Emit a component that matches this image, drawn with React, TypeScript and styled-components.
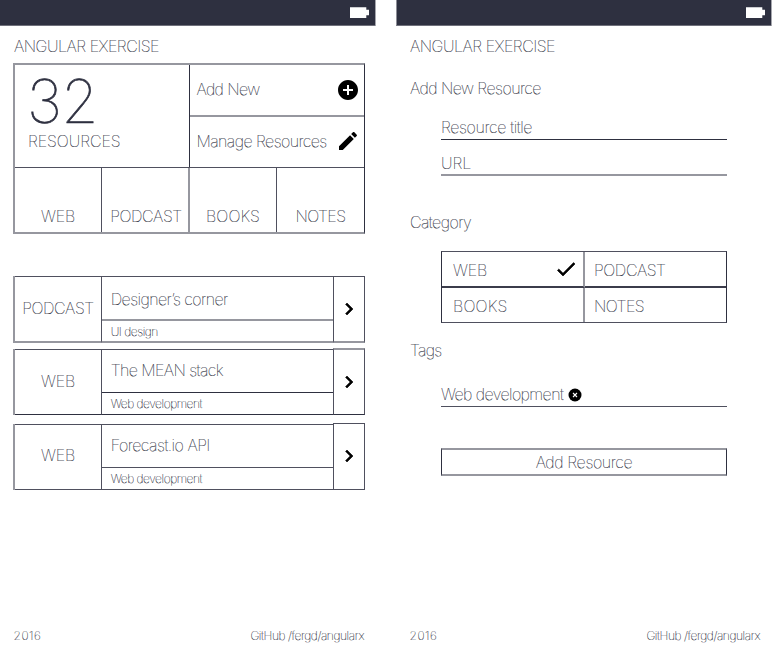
import React from "react";
import styled, { createGlobalStyle, css } from "styled-components";

const ink = "#2e3040";
const crisp = `1px solid ${ink}`;
const medium = "1px solid #4f505e";
const soft = "2px solid #96979f";

const GlobalStyle = createGlobalStyle`
  * { box-sizing: border-box; }
  body { margin: 0; background: #fff; }
  button { appearance: none; background: none; border: 0; padding: 0; margin: 0; font: inherit; color: inherit; text-align: left; }
`;

const Screens = styled.div`
  display: flex;
  gap: 21px;
  width: 772px;
  height: 667px;
  overflow: hidden;
  color: ${ink};
  font-family: Inter, "Liberation Sans", sans-serif;
  font-weight: 100;
  font-size: 16px;
  line-height: 20px;
`;

const Screen = styled.section`
  display: flex;
  flex-direction: column;
  width: 375px;
  height: 667px;
`;

const StatusBar = styled.header<{ $edge?: boolean }>`
  display: flex;
  justify-content: flex-end;
  height: 26px;
  padding: 7px 6px 0 0;
  background: ${ink};
  border-bottom: 1px solid #6f707b;
  border-left: ${(p) => (p.$edge ? "1px solid #8d8e97" : "0")};
  box-shadow: 1px 0 0 #a5a6ad;
`;

const Text = styled.span<{ $track?: number }>`
  white-space: nowrap;
  letter-spacing: ${(p) => p.$track ?? 0}px;
  -webkit-text-stroke: 0.16px ${ink};
`;

const SmallText = styled(Text)`
  font-size: 12px;
  line-height: 16px;
`;

const AppTitle = styled.h1`
  margin: 10px 0 0 14px;
  font: inherit;
  height: 20px;
`;

const Board = styled.div`
  width: 352px;
  margin: 7px 0 0 13px;
  border: ${soft};
  border-right: ${crisp};
`;

const BoardTop = styled.div`
  display: grid;
  grid-template-columns: 175px 1fr;
  height: 103px;
  border-bottom: ${medium};
`;

const Summary = styled.div`
  display: flex;
  flex-direction: column;
  padding: 6px 0 0 13px;
  border-right: ${crisp};
`;

const Count = styled.strong`
  height: 60px;
  margin-left: -1px;
  font-size: 60px;
  line-height: 60px;
  font-weight: 100;
  letter-spacing: -0.6px;
  -webkit-text-stroke: 0.7px ${ink};
`;

const Actions = styled.div`
  display: grid;
  grid-template-rows: 52px 50px;
`;

const Action = styled.button`
  display: flex;
  align-items: center;
  justify-content: space-between;
  padding: 0 4px 2px 6.5px;

  ${Text} {
    margin-top: -1px;
  }

  &:first-child {
    padding-bottom: 0;
    border-bottom: ${soft};
  }

  &:first-child ${Text} {
    margin-top: -3px;
  }
`;

const Totals = styled.div`
  display: grid;
  grid-template-columns: 87px 88px 87px 87px;
  height: 64px;
`;

const Total = styled.button<{ $line?: "soft" | "medium" }>`
  display: flex;
  align-items: flex-end;
  justify-content: center;
  padding-bottom: 6px;
  ${(p) => p.$line && css`border-right: ${p.$line === "soft" ? soft : medium};`}
  ${(p) => p.$line === "soft" && css`padding-left: 2px;`}
`;

const Entries = styled.div`
  margin: 42px 0 0 13px;
  width: 352px;
`;

type Rule = "soft" | "medium" | "crisp";
const rules: Record<Rule, string> = { soft, medium, crisp };

const Entry = styled.article<{ $gap: number; $bottom: Rule }>`
  display: grid;
  grid-template-columns: 87px 231px 32px;
  height: ${(p) => (p.$bottom === "soft" ? 67 : 66)}px;
  margin-top: ${(p) => p.$gap}px;
  border-left: ${soft};
`;

const EntryKind = styled.div<{ $bottom: Rule }>`
  display: flex;
  align-items: center;
  justify-content: center;
  padding-bottom: ${(p) => (p.$bottom === "medium" ? 4 : 2)}px;
  border-top: ${medium};
  border-right: ${medium};
  border-bottom: ${(p) => rules[p.$bottom]};
`;

const EntryBody = styled.div<{ $bottom: Rule }>`
  display: flex;
  flex-direction: column;
  border-top: ${medium};
  border-bottom: ${(p) => rules[p.$bottom]};
`;

const EntryName = styled.div<{ $rule: Rule }>`
  display: flex;
  align-items: center;
  height: ${(p) => (p.$rule === "soft" ? 44 : 43)}px;
  padding: ${(p) => (p.$rule === "soft" ? "1px" : "0")} 0 ${(p) => (p.$rule === "soft" ? "0" : "2px")} 8.7px;
  border-bottom: ${(p) => rules[p.$rule]};
`;

const EntryTag = styled.div`
  display: flex;
  flex: 1;
  align-items: center;
  padding: 1px 0 0 8.7px;
`;

const EntryOpen = styled.button<{ $top: "level" | "wide" | "raised"; $bottom: Rule }>`
  display: flex;
  align-items: center;
  justify-content: center;
  width: 32px;
  margin-top: ${(p) => (p.$top === "level" ? 0 : -1)}px;
  padding-bottom: ${(p) => (p.$top === "raised" ? 1 : 0)}px;
  border-top: ${(p) => (p.$top === "wide" ? soft : medium)};
  border-left: ${medium};
  border-right: ${medium};
  border-bottom: ${(p) => rules[p.$bottom]};
`;

const Footer = styled.footer`
  display: flex;
  justify-content: space-between;
  margin-top: auto;
  padding: 0 11px 23px 13.5px;
`;

const FormHeading = styled.h2<{ $top: number }>`
  margin: ${(p) => p.$top}px 0 0 14px;
  height: 20px;
  font: inherit;
`;

const Field = styled.div<{ $height: number; $line: Rule; $top: number }>`
  display: flex;
  align-items: flex-start;
  gap: 6px;
  width: 286px;
  height: ${(p) => p.$height}px;
  margin: ${(p) => p.$top}px 0 0 45px;
  border-bottom: ${(p) => rules[p.$line]};
`;

const Choices = styled.div`
  display: grid;
  grid-template-columns: 143px 141px;
  grid-template-rows: 36px 34px;
  width: 286px;
  margin: 19px 0 0 45px;
  border: ${crisp};
  border-top: ${medium};
  border-bottom: ${medium};
`;

const Choice = styled.button<{ $first?: boolean; $upper?: boolean }>`
  display: flex;
  align-items: center;
  justify-content: space-between;
  padding: ${(p) => (p.$upper ? 2 : 1)}px 5px 0 ${(p) => (p.$first ? 11 : 9)}px;
  ${(p) => p.$first && css`border-right: ${soft};`}
  ${(p) => p.$upper && css`border-bottom: 2px solid #3b3c4b;`}

  svg {
    margin-top: -2px;
  }
`;

const Submit = styled.button`
  display: flex;
  align-items: center;
  justify-content: center;
  width: 286px;
  height: 28px;
  margin: 41px 0 0 45px;
  border: ${soft};
  border-left: ${crisp};
  border-right: ${crisp};
`;

const Glyph = styled.svg<{ $bold?: boolean }>`
  display: block;
  flex: none;
  width: 24px;
  height: 24px;
  fill: #000;
  stroke: #000;
  stroke-width: ${(p) => (p.$bold ? 0.6 : 0)};
`;

const RemoveGlyph = styled.svg`
  display: block;
  width: 14px;
  height: 14px;
  margin: 4px 0 0 -1px;
  stroke: #fff;
  stroke-width: 1.1;
`;

const BatteryShape = styled.svg`
  display: block;
  width: 19px;
  height: 11px;
  fill: #fff;
`;

const shapes = {
  add: "M12 2C6.48 2 2 6.48 2 12s4.48 10 10 10 10-4.48 10-10S17.52 2 12 2zm5 11h-4v4h-2v-4H7v-2h4V7h2v4h4v2z",
  edit: "M3 17.25V21h3.75L17.81 9.94l-3.75-3.75L3 17.25zM20.71 7.04c.39-.39.39-1.02 0-1.41l-2.34-2.34c-.39-.39-1.02-.39-1.41 0l-1.83 1.83 3.75 3.75 1.83-1.83z",
  next: "M10 6L8.59 7.41 13.17 12l-4.58 4.59L10 18l6-6z",
  check: "M9 16.17L4.83 12l-1.42 1.41L9 19 21 7l-1.41-1.41z",
};

const Icon = ({ name }: { name: keyof typeof shapes }) => (
  <Glyph $bold={name === "next" || name === "check"} viewBox="0 0 24 24" aria-hidden="true">
    <path d={shapes[name]} />
  </Glyph>
);

const RemoveIcon = () => (
  <RemoveGlyph viewBox="0 0 14 14" aria-hidden="true">
    <circle cx="7" cy="7" r="6.5" fill="#000" stroke="none" />
    <path d="M5 5l4 4M9 5l-4 4" />
  </RemoveGlyph>
);

const Battery = () => (
  <BatteryShape viewBox="0 0 19 11" aria-hidden="true">
    <path d="M0 .3h16.3v2.5H19v5.5h-2.7V11H0z" />
  </BatteryShape>
);

type EntryData = {
  kind: string;
  kindTrack: number;
  name: string;
  nameTrack: number;
  tag: string;
  gap: number;
  rule: Rule;
  bottom: Rule;
  openTop: "level" | "wide" | "raised";
};

const entries: EntryData[] = [
  { kind: "PODCAST", kindTrack: -0.4, name: "Designer’s corner", nameTrack: -0.55, tag: "UI design", gap: 0, rule: "soft", bottom: "soft", openTop: "level" },
  { kind: "WEB", kindTrack: -0.1, name: "The MEAN stack", nameTrack: -0.57, tag: "Web development", gap: 6, rule: "crisp", bottom: "crisp", openTop: "wide" },
  { kind: "WEB", kindTrack: -0.1, name: "Forecast.io API", nameTrack: -0.48, tag: "Web development", gap: 9, rule: "medium", bottom: "medium", openTop: "raised" },
];

const PageFooter = () => (
  <Footer>
    <SmallText $track={0.5}>2016</SmallText>
    <SmallText $track={-0.4}>GitHub /fergd/angularx</SmallText>
  </Footer>
);

const Overview = () => (
  <Screen>
    <StatusBar><Battery /></StatusBar>
    <AppTitle><Text $track={-0.48}>ANGULAR EXERCISE</Text></AppTitle>
    <Board>
      <BoardTop>
        <Summary>
          <Count>32</Count>
          <Text $track={-0.05}>RESOURCES</Text>
        </Summary>
        <Actions>
          <Action><Text $track={-0.6}>Add New</Text><Icon name="add" /></Action>
          <Action><Text $track={-0.57}>Manage Resources</Text><Icon name="edit" /></Action>
        </Actions>
      </BoardTop>
      <Totals>
        <Total $line="medium"><Text $track={-0.1}>WEB</Text></Total>
        <Total $line="soft"><Text $track={-0.4}>PODCAST</Text></Total>
        <Total $line="medium"><Text $track={0.1}>BOOKS</Text></Total>
        <Total><Text $track={-0.55}>NOTES</Text></Total>
      </Totals>
    </Board>
    <Entries>
      {entries.map((e) => (
        <Entry key={e.name} $gap={e.gap} $bottom={e.bottom}>
          <EntryKind $bottom={e.bottom}><Text $track={e.kindTrack}>{e.kind}</Text></EntryKind>
          <EntryBody $bottom={e.bottom}>
            <EntryName $rule={e.rule}><Text $track={e.nameTrack}>{e.name}</Text></EntryName>
            <EntryTag><SmallText $track={-0.46}>{e.tag}</SmallText></EntryTag>
          </EntryBody>
          <EntryOpen $top={e.openTop} $bottom={e.bottom} aria-label={`Open ${e.name}`}><Icon name="next" /></EntryOpen>
        </Entry>
      ))}
    </Entries>
    <PageFooter />
  </Screen>
);

const NewResource = () => (
  <Screen>
    <StatusBar $edge><Battery /></StatusBar>
    <AppTitle><Text $track={-0.48}>ANGULAR EXERCISE</Text></AppTitle>
    <FormHeading $top={22}><Text $track={-0.55}>Add New Resource</Text></FormHeading>
    <Field $top={19} $height={23} $line="crisp"><Text $track={-0.37}>Resource title</Text></Field>
    <Field $top={13} $height={23} $line="soft"><Text>URL</Text></Field>
    <FormHeading $top={36}><Text $track={-0.55}>Category</Text></FormHeading>
    <Choices>
      <Choice $first $upper><Text $track={-0.1}>WEB</Text><Icon name="check" /></Choice>
      <Choice $upper><Text $track={-0.4}>PODCAST</Text></Choice>
      <Choice $first><Text $track={0.2}>BOOKS</Text></Choice>
      <Choice><Text $track={-0.5}>NOTES</Text></Choice>
    </Choices>
    <FormHeading $top={17}><Text $track={-0.7}>Tags</Text></FormHeading>
    <Field $top={24} $height={23} $line="medium">
      <Text $track={-0.58}>Web development</Text>
      <RemoveIcon />
    </Field>
    <Submit><Text $track={-0.38}>Add Resource</Text></Submit>
    <PageFooter />
  </Screen>
);

export default function App() {
  return (
    <Screens>
      <GlobalStyle />
      <Overview />
      <NewResource />
    </Screens>
  );
}
